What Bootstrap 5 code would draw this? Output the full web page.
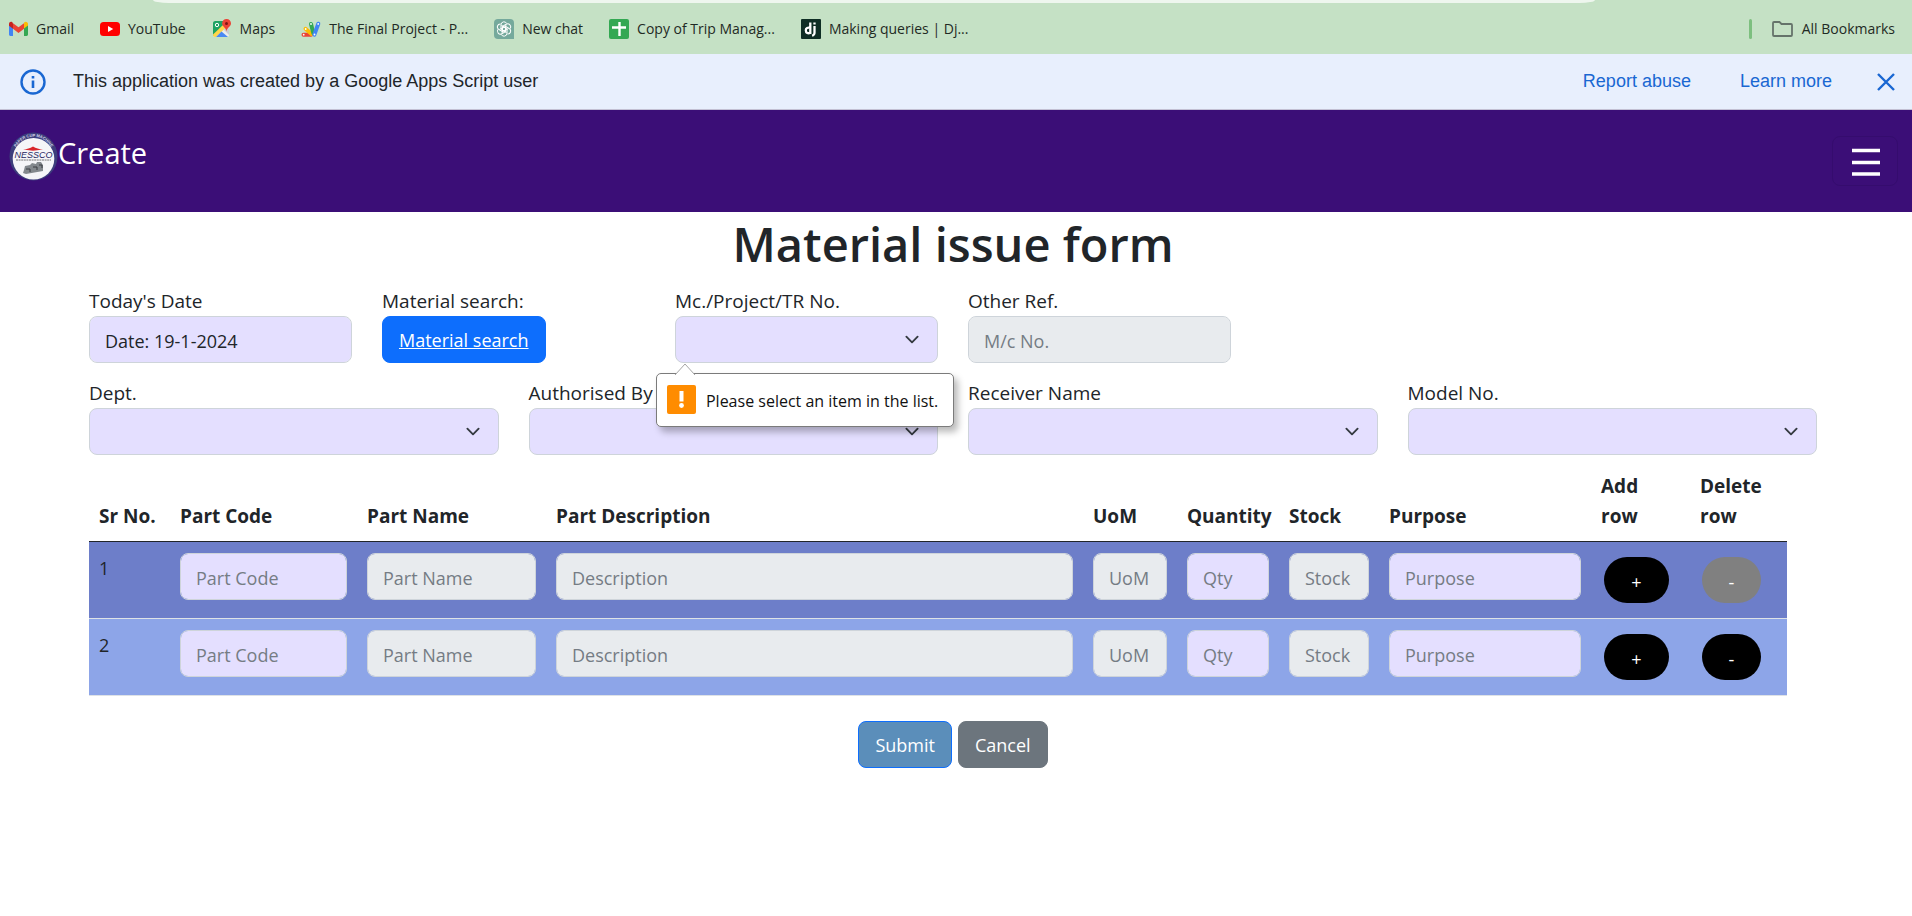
<!DOCTYPE html>
<html lang="en">
<head>
<meta charset="utf-8">
<meta name="viewport" content="width=device-width, initial-scale=1">
<title>Material issue form</title>
<link href="https://cdn.jsdelivr.net/npm/bootstrap@5.3.0/dist/css/bootstrap.min.css" rel="stylesheet">
<style>
  body { font-family: "Open Sans", "Noto Sans", sans-serif; font-size: 18px; line-height: 30px; color: #212529; }

  /* browser bookmarks strip */
  .bookmarks { background: #c5e1c5; height: 54px; font-size: 14px; line-height: 20px; position: relative; padding: 3px 17px 0 9px; }
  .bookmarks a { color: #1f2a24; text-decoration: none; display: flex; align-items: center; gap: 8px; white-space: nowrap; }
  .bookmarks svg { flex: none; }
  .omnibox-edge { position: absolute; top: 0; left: 8%; right: 317px; height: 3px; background: #eef6ee; border-radius: 0 0 16px 16px / 0 0 3px 3px; }
  .bm-links { column-gap: 26px; }
  .bm-rule { width: 3px; height: 20px; border-radius: 2px; background: #7dbf7f; margin-right: 19px; }

  /* Apps Script notice */
  .notice { background: #e8effd; height: 56px; border-bottom: 1px solid #c3c0d4; font-family: "Liberation Sans", Arial, sans-serif; line-height: 26px; padding: 0 16px 0 20px; }
  .notice a { color: #1967d2; text-decoration: none; }
  .notice .message { margin-left: 27px; }
  .notice .report { margin-right: 49px; }
  .notice .learn { margin-right: 44px; }
  .notice span, .notice a { padding-bottom: 2px; }
  .bare-btn { border: 0; background: none; padding: 0; display: flex; }

  .topbar { background: #3b0e77; height: 102px; padding: 0 14px 0 9px; }
  .topbar .logo { margin-bottom: 10px; }
  .topbar .brand-name { color: #fff; font-size: 29px; line-height: 42px; margin-bottom: 16px; }
  .menu-btn { width: 66px; height: 50px; border: 1px solid #350c6e; border-radius: 8px; background: none; padding: 2px 0 0 2px; display: flex; align-items: center; justify-content: center; }

  .form-area { padding: 0 95px 0 89px; }
  .form-area h1 { font-size: 47px; line-height: 60px; font-weight: 600; margin: 2px 0 12px; }
  .form-area .row { --bs-gutter-x: 30px; margin-bottom: 15px; }
  .form-area label { display: block; font-size: 19px; }
  .form-control, .form-select { height: 47px; font-size: 18px; line-height: 30px; padding: 9px 15px 7px; border-radius: 8px; background-color: #e4dfff; border-color: #ced4da; color: #212529; }
  .form-select { background-position: right 15px center; background-size: 20px 15px; padding-right: 45px; }
  .form-control:disabled { background-color: #e8ebee; }
  .form-control::placeholder { color: #757c84; }
  .btn { font-size: 18px; line-height: 30px; padding: 8px 16px 7px; height: 47px; border-radius: 8px; }

  /* browser validation bubble */
  .bubble { position: absolute; top: 87px; left: -4px; z-index: 5; height: 54px; display: flex; align-items: center; gap: 10px; padding: 0 15px 2px 10px; background: #fff; border: 1px solid #7b7b7b; border-radius: 5px; box-shadow: 4px 5px 7px rgba(0,0,0,.28); color: #111; font-size: 16px; line-height: 24px; white-space: nowrap; }
  .bubble .beak { position: absolute; left: 17px; top: -11px; }
  .bubble span { padding-top: 3px; }

  .parts-wrap { padding-right: 30px; margin-top: -9px; }
  .parts { table-layout: fixed; width: 100%; margin: 0 0 25px; }
  .parts th, .parts td { padding: 10px; vertical-align: top; }
  .parts thead th { vertical-align: bottom; font-size: 19px; font-weight: 700; border-bottom: 1px solid #212529; white-space: nowrap; }
  .parts tbody td { height: 77px; padding: 11px 10px 0; border-bottom: 1px solid #dee2e6; color: #212529; line-height: 30px; }
  .parts tbody tr:nth-child(odd) td { background: #6d7ec9; }
  .parts tbody tr:nth-child(even) td { background: #8da5e8; }
  .round-btn { display: block; height: 46px; border: 0; border-radius: 23px; background: #000; color: #fff; margin: 4px 0 0 3px; padding: 3px 0 0; width: 65px; }
  .round-btn.remove { width: 59px; margin-left: 2px; }
  .round-btn:disabled { background: #808080; }
  .btn-submit { background: #5b8eba; border-color: #0d6efd; color: #fff; }
</style>
</head>
<body>

<nav class="bookmarks d-flex align-items-center justify-content-between" aria-label="Bookmarks">
  <div class="omnibox-edge"></div>
  <div class="bm-links d-flex align-items-center">
    <a href="#"><svg width="19" height="20" viewBox="0 0 19 20"><path d="M0 5v10.500c0 .8.6 1.400 1.400 1.400H4V8z" fill="#4285f4"/><path d="M15 8v8.900h2.600c.8 0 1.400-.6 1.400-1.400V5z" fill="#34a853"/><path d="M15 4.500V9.500l4-3V5c0-2-2.200-3-3.700-1.800z" fill="#fbbc04"/><path d="M4 9.700V4.200l5.500 4.100L15 4.200v5.500l-5.500 4.200z" fill="#ea4335"/><path d="M0 5v1.700l4 3V4.200l-.7-.9C1.900 2.100 0 3.200 0 5z" fill="#c5221f"/></svg>Gmail</a>
    <a href="#"><svg width="20" height="20" viewBox="0 0 20 20"><rect y="3" width="20" height="14" rx="3.500" fill="#f00"/><path d="M8 7v6l5.200-3z" fill="#fff"/></svg>YouTube</a>
    <a href="#"><svg width="20" height="20" viewBox="0 0 20 20"><rect x="1" y="2" width="16" height="16" rx="2" fill="#ececec"/><path d="M1 4c0-1.100.9-2 2-2h10l-2 6-10 9z" fill="#1ea362"/><path d="M1 15.500 11 6l2.500 3L4 18H3c-1.100 0-2-.9-2-2z" fill="#ffd64b"/><path d="M9.500 12.500 16 18H4z" fill="#4a89f3"/><path d="M11.500 10.500 17 16V9z" fill="#c9cdd2"/><circle cx="5" cy="6" r="1.700" fill="none" stroke="#fff"/><path d="M14.500 0a4.400 4.400 0 0 0-4.400 4.500c0 3.300 3.900 3.800 4.400 8 .5-4.200 4.500-4.700 4.500-8A4.400 4.400 0 0 0 14.500 0z" fill="#ea4335"/><circle cx="14.500" cy="4.500" r="1.500" fill="#811411"/></svg>Maps</a>
    <a href="#"><svg width="20" height="20" viewBox="0 0 20 20"><g fill="none" stroke-linecap="round" stroke-width="4"><path d="M2.500 15.700H10" stroke="#ea4335"/><path d="m4.500 9.800 6 5.200" stroke="#fbbc04"/><path d="m10 5 2.300 9" stroke="#34a853"/><path d="m17.300 4.700-4 11" stroke="#4285f4"/></g><g fill="#fff"><circle cx="2.700" cy="15.700" r=".9"/><circle cx="4.700" cy="10" r=".9"/><circle cx="10" cy="5" r=".9"/><circle cx="17.200" cy="4.900" r=".9"/><circle cx="13.500" cy="15.500" r=".9"/></g></svg>The Final Project - P...</a>
    <a href="#"><svg width="20" height="20" viewBox="0 0 20 20"><path d="M4 0h12a4 4 0 0 1 4 4v16H4a4 4 0 0 1-4-4V4a4 4 0 0 1 4-4z" fill="#75a99c"/><g fill="none" stroke="#fff" stroke-width="1"><path id="petal" d="M7 10V5.800a3 3 0 0 1 5.700-1.300M7 10l3.300 2 4-2.400"/><use href="#petal" transform="rotate(60 10 10)"/><use href="#petal" transform="rotate(120 10 10)"/><use href="#petal" transform="rotate(180 10 10)"/><use href="#petal" transform="rotate(240 10 10)"/><use href="#petal" transform="rotate(300 10 10)"/></g></svg>New chat</a>
    <a href="#"><svg width="20" height="20" viewBox="0 0 20 20"><rect width="20" height="20" rx="2" fill="#34a853"/><path d="M3 8.500h14M10.500 3v14" stroke="#fff" stroke-width="2.400"/></svg>Copy of Trip Manag...</a>
    <a href="#"><svg width="20" height="20" viewBox="0 0 20 20"><rect width="20" height="20" rx="1" fill="#0f2e25"/><g fill="none" stroke="#fff" stroke-width="2.300"><path d="M9.300 3.500V14c-2.300.6-4.500.2-4.500-2.700 0-2.300 1.900-3.200 4.500-2.500M13.500 7v7.200c0 1.500-.8 2-2.300 2.700M13.500 3.500v2"/></g></svg>Making queries | Dj...</a>
  </div>
  <div class="d-flex align-items-center">
    <div class="bm-rule"></div>
    <a href="#"><svg width="23" height="20" viewBox="0 0 23 20"><path d="M3 3h5.500l2 2H20a1 1 0 0 1 1 1v10a1 1 0 0 1-1 1H3a1 1 0 0 1-1-1V4a1 1 0 0 1 1-1z" fill="none" stroke="#65736a" stroke-width="1.800"/></svg>All Bookmarks</a>
  </div>
</nav>

<div class="notice d-flex align-items-center">
  <svg width="26" height="26" viewBox="0 0 26 26" role="img" aria-label="Information"><circle cx="13" cy="13" r="11.500" fill="none" stroke="#1967d2" stroke-width="2.400"/><path d="M13 11.500V19M13 7v2.600" stroke="#1967d2" stroke-width="2.600"/></svg>
  <span class="message flex-grow-1">This application was created by a Google Apps Script user</span>
  <a class="report" href="#">Report abuse</a>
  <a class="learn" href="#">Learn more</a>
  <button type="button" class="bare-btn" aria-label="Close"><svg width="20" height="20" viewBox="0 0 20 20"><path d="m2 2 16 16M18 2 2 18" stroke="#1967d2" stroke-width="2.400"/></svg></button>
</div>

<header class="topbar d-flex align-items-center justify-content-between">
  <div class="d-flex align-items-center">
    <svg class="logo" width="49" height="49" viewBox="0 0 49 49" role="img" aria-label="Nessco logo">
      <defs><path id="rim" d="M5.200 20.500A19.700 19.700 0 0 1 43.800 20.500"/></defs>
      <circle cx="24.500" cy="24.500" r="24" fill="#3d3e7c"/><circle cx="24.500" cy="26.700" r="20.800" fill="#f5f5f8"/>
      <text font-size="4" font-weight="700" fill="#d5d6ea" font-family="Liberation Sans, sans-serif" text-anchor="middle"><textPath href="#rim" startOffset="50%">PAPER CUP MACHINE</textPath></text>
      <path d="M14 17.500c4-.2 7-1.200 10-3 3 1.800 6 2.800 10 3l-10 1.200z" fill="#d9252b"/>
      <text x="24.500" y="25.500" text-anchor="middle" font-size="9" font-style="italic" fill="#26265f" font-family="Liberation Sans, sans-serif">NESSCO</text>
      <path d="M7 28h35" stroke="#555" stroke-width=".8" stroke-dasharray="2 .6"/>
      <path d="M15 38l1-4 5-1 2-2 4 1 1-2h4l2 3v6l-17 3-3-1z" fill="#83888d"/><path d="M17 37h4v3M24 35h4v3M30 33h3v3" fill="none" stroke="#3a3d42"/>
    </svg>
    <span class="brand-name">Create</span>
  </div>
  <button type="button" class="menu-btn" aria-label="Menu"><svg width="28" height="28" viewBox="0 0 28 28"><path d="M0 2.500h28M0 14.500h28M0 26h28" stroke="#fff" stroke-width="3.600"/></svg></button>
</header>

<main class="form-area">
  <h1 class="text-center">Material issue form</h1>
  <form novalidate>
    <div class="row">
      <div class="col-2"><label for="today">Today's Date</label><input id="today" type="text" class="form-control" value="Date: 19-1-2024"></div>
      <div class="col-2"><label for="search">Material search:</label><button id="search" type="button" class="btn btn-primary text-decoration-underline">Material search</button></div>
      <div class="col-2 position-relative">
        <label for="project">Mc./Project/TR No.</label><select id="project" class="form-select" required><option></option></select>
        <div class="bubble" role="alert">
          <svg class="beak" width="22" height="12" viewBox="0 0 22 12"><path d="M1 12 11 1l10 11" fill="#fff" stroke="#a5a5a5"/></svg>
          <svg width="29" height="29" viewBox="0 0 29 29"><rect width="29" height="29" rx="2" fill="#ff8c00"/><path d="M12.500 6h4v10.500h-4z" fill="#fff"/><circle cx="14.500" cy="20.500" r="2.400" fill="#fff"/></svg>
          <span>Please select an item in the list.</span>
        </div>
      </div>
      <div class="col-2"><label for="other">Other Ref.</label><input id="other" type="text" class="form-control" placeholder="M/c No." disabled></div>
    </div>
    <div class="row">
      <div class="col-3"><label for="dept">Dept.</label><select id="dept" class="form-select"><option></option></select></div>
      <div class="col-3"><label for="auth">Authorised By</label><select id="auth" class="form-select"><option></option></select></div>
      <div class="col-3"><label for="receiver">Receiver Name</label><select id="receiver" class="form-select"><option></option></select></div>
      <div class="col-3"><label for="model">Model No.</label><select id="model" class="form-select"><option></option></select></div>
    </div>

    <div class="parts-wrap">
      <table class="parts">
        <colgroup><col style="width:81px"><col style="width:187px"><col style="width:189px"><col><col style="width:94px"><col style="width:102px"><col style="width:100px"><col style="width:212px"><col style="width:99px"><col style="width:97px"></colgroup>
        <thead><tr><th class="pe-0">Sr No.</th><th>Part Code</th><th>Part Name</th><th>Part Description</th><th>UoM</th><th class="pe-0">Quantity</th><th>Stock</th><th>Purpose</th><th>Add<br>row</th><th>Delete<br>row</th></tr></thead>
        <tbody>
          <tr>
            <td>1</td>
            <td><input aria-label="Part Code 1" class="form-control" placeholder="Part Code"></td>
            <td><input aria-label="Part Name 1" class="form-control" placeholder="Part Name" disabled></td>
            <td><input aria-label="Description 1" class="form-control" placeholder="Description" disabled></td>
            <td><input aria-label="UoM 1" class="form-control pe-0" placeholder="UoM" disabled></td>
            <td><input aria-label="Quantity 1" class="form-control" placeholder="Qty"></td>
            <td><input aria-label="Stock 1" class="form-control pe-0" placeholder="Stock" disabled></td>
            <td><input aria-label="Purpose 1" class="form-control" placeholder="Purpose"></td>
            <td><button type="button" class="round-btn">+</button></td>
            <td><button type="button" class="round-btn remove" disabled>-</button></td>
          </tr>
          <tr>
            <td>2</td>
            <td><input aria-label="Part Code 2" class="form-control" placeholder="Part Code"></td>
            <td><input aria-label="Part Name 2" class="form-control" placeholder="Part Name" disabled></td>
            <td><input aria-label="Description 2" class="form-control" placeholder="Description" disabled></td>
            <td><input aria-label="UoM 2" class="form-control pe-0" placeholder="UoM" disabled></td>
            <td><input aria-label="Quantity 2" class="form-control" placeholder="Qty"></td>
            <td><input aria-label="Stock 2" class="form-control pe-0" placeholder="Stock" disabled></td>
            <td><input aria-label="Purpose 2" class="form-control" placeholder="Purpose"></td>
            <td><button type="button" class="round-btn">+</button></td>
            <td><button type="button" class="round-btn remove">-</button></td>
          </tr>
        </tbody>
      </table>
    </div>
    <div class="d-flex justify-content-center" style="gap:6px">
      <button type="submit" class="btn btn-submit">Submit</button>
      <button type="button" class="btn btn-secondary">Cancel</button>
    </div>
  </form>
</main>

<script src="https://cdn.jsdelivr.net/npm/bootstrap@5.3.0/dist/js/bootstrap.bundle.min.js"></script>
</body>
</html>
